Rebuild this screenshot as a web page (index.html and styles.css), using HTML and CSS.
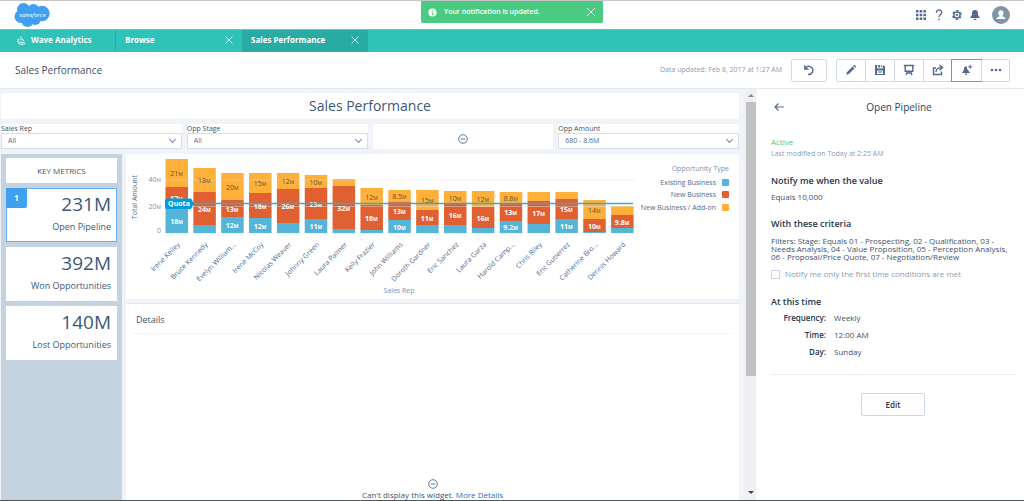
FILE: index.html
```html
<!DOCTYPE html>
<html lang="en">
<head>
<meta charset="utf-8">
<title>Sales Performance</title>
<link rel="stylesheet" href="styles.css">
</head>
<body>
<div class="app">
  <header class="topbar">
    <svg class="logo" viewBox="0 0 36 26" role="img" aria-label="salesforce">
      <g fill="#3f9ff0"><circle cx="9.500" cy="7.500" r="6.500"/><circle cx="19.500" cy="7.500" r="5.500"/><circle cx="28" cy="11.500" r="7.700"/><circle cx="7" cy="14.500" r="6.500"/><circle cx="13.500" cy="19" r="6"/><circle cx="21" cy="17" r="6"/><path d="M5 9h22v9H5z"/></g>
      <text class="logo-text" x="18.500" y="14.500">salesforce</text>
    </svg>
    <div class="toast" role="status">
      <svg class="toast-icon" viewBox="0 0 10 10"><circle cx="5" cy="5" r="4.500" fill="#fff"/><path d="M4.200 4.500H5.300V7.300M4.200 7.300h2M5 2.400v1.100" stroke="#4bca81" fill="none"/></svg>
      <span>Your notification is updated.</span>
      <button class="close toast-close" aria-label="Close notification"><svg viewBox="0 0 10 10"><path d="M1 1l8 8M9 1L1 9"/></svg></button>
    </div>
    <nav class="tools">
      <button class="icon-button" aria-label="Apps"><svg viewBox="0 0 12 12" fill="#54698d"><path d="M1 1h2.500v2.500H1zM4.700 1h2.500v2.500H4.700zM8.400 1h2.500v2.500H8.400zM1 4.700h2.500v2.500H1zM4.700 4.700h2.500v2.500H4.700zM8.400 4.700h2.500v2.500H8.400zM1 8.400h2.500v2.500H1zM4.700 8.400h2.500v2.500H4.700zM8.400 8.400h2.500v2.500H8.400z"/></svg></button>
      <button class="icon-button" aria-label="Help"><svg viewBox="0 0 12 12" fill="none" stroke="#54698d" stroke-width="1.300"><path d="M3.400 3.700C3.400 0 8.700 0 8.700 3.500C8.700 5.600 6 5.600 6 8.200M6 9.700v1.500"/></svg></button>
      <button class="icon-button" aria-label="Setup"><svg viewBox="0 0 12 12" fill="none" stroke="#54698d"><circle cx="6" cy="6" r="3.100" stroke-width="1.500"/><circle cx="6" cy="6" r="4.300" stroke-width="1.400" stroke-dasharray="2.250 2.250" stroke-dashoffset="1.120" transform="rotate(30 6 6)"/><circle cx="6" cy="6" r=".7" fill="#54698d"/></svg></button>
      <button class="icon-button" aria-label="Notifications"><svg viewBox="0 0 12 12" fill="#54698d"><path d="M6 1C3.800 1 3 2.700 3 4.300C3 6.800 2.300 7.600 1.300 8.200V9h9.400V8.200C9.700 7.600 9 6.800 9 4.300C9 2.700 8.200 1 6 1zM4.400 9.700h3.200C7.400 11.600 4.600 11.600 4.400 9.700z"/></svg></button>
      <button class="icon-button avatar" aria-label="Profile"><svg viewBox="0 0 18 18"><circle cx="9" cy="9" r="9" fill="#7f95ac"/><path d="M9 4.200c3.400 0 3 4.800 1.200 5.900c.2 1 3.300.8 3.300 3H4.500c0-2.200 3.100-2 3.300-3C6 9 5.600 4.200 9 4.200z" fill="#fff"/></svg></button>
    </nav>
  </header>

  <nav class="tabs">
    <a class="tab tab-home" href="#"><svg class="wave" viewBox="0 0 10 10" fill="none" stroke="#c9f1ed" stroke-width="1.300"><path d="M5 .8C3.300 2.300 5.300 3.300 4.300 4.700M2.300 3C0 5 .8 9.200 4.500 9.200C7 9.500 8.300 8.800 9.300 8.300M3 5.800C3.500 7.500 6 7.500 8.500 6.600M6.500 3.300C5.800 5 7 5 8 5"/></svg>Wave Analytics</a>
    <div class="tab"><a href="#">Browse</a><button class="close" aria-label="Close Browse"><svg viewBox="0 0 10 10"><path d="M1.500 1.500l7 7M8.500 1.500l-7 7"/></svg></button></div>
    <div class="tab tab-current"><a href="#">Sales Performance</a><button class="close" aria-label="Close Sales Performance"><svg viewBox="0 0 10 10"><path d="M1.500 1.500l7 7M8.500 1.500l-7 7"/></svg></button></div>
  </nav>

  <div class="toolbar">
    <h1 class="page-title">Sales Performance</h1>
    <span class="updated">Data updated: Feb 8, 2017 at 1:27 AM</span>
    <button class="tool single" aria-label="Undo"><svg viewBox="0 0 12 12"><path class="line" d="M1.800 1.300V5H5.500M2.200 4.600A4 4 0 1 1 5 10.300"/></svg></button>
    <div class="tool-group">
      <button class="tool" aria-label="Edit"><svg viewBox="0 0 12 12"><path d="M1.200 10.800l.7-2.600l5.700-5.700l1.900 1.900l-5.700 5.700zM8.200 1.900l.8-.8c.7-.6 2.400 1 1.800 1.800l-.8.8z"/></svg></button>
      <button class="tool" aria-label="Save"><svg viewBox="0 0 12 12"><path fill-rule="evenodd" d="M1 1h2.200v3.600h5.600V1L11 2.600V11H1zM3 6.500V10h6V6.500zM4.200 1h2v2.600h-2zM7.400 1h.7v2.600h-.7zM4 7.500h4v1H4z"/></svg></button>
      <button class="tool" aria-label="Present"><svg viewBox="0 0 12 12"><path class="line" d="M.8 1.500h10.400M2.200 1.500v5.700h7.600V1.500M4.500 7.500L3 11M7.500 7.500L9 11M4 9h4"/></svg></button>
      <button class="tool" aria-label="Share"><svg viewBox="0 0 12 12"><path class="line" d="M4 4H1.500v6.500h8V7.500M4 8C4 5.500 6 3.600 9.500 3.600M7.500 1l3 2.600l-3 2.600"/></svg></button>
      <button class="tool tool-active" aria-label="Set notification"><svg viewBox="0 0 12 12"><path d="M5 2.500C2.900 2.500 3 5 2.700 6.300C2.500 7.500 1.500 7.700 1 8.500v.6h8V8.500C8 7.700 7.500 7.300 7.400 6.200L6 5V2.600zM3.800 9.600h2.500c-.2 1.700-2.300 1.700-2.500 0z"/><path class="line thin" d="M9.200 .8v4M7.200 2.800h4"/></svg></button>
      <button class="tool" aria-label="More actions"><svg viewBox="0 0 12 12"><circle cx="2" cy="6" r="1.300"/><circle cx="6" cy="6" r="1.300"/><circle cx="10" cy="6" r="1.300"/></svg></button>
    </div>
  </div>

  <div class="workspace">
    <main class="dashboard">
      <h2 class="dashboard-title">Sales Performance</h2>
      <div class="filters">
        <div class="filter"><label for="rep">Sales Rep</label><select id="rep"><option>All</option></select></div>
        <div class="filter"><label for="stage">Opp Stage</label><select id="stage"><option>All</option></select></div>
        <div class="filter-empty"><svg class="minus" viewBox="0 0 10 10"><circle cx="5" cy="5" r="4.300"/><path d="M2.700 5h4.600"/></svg></div>
        <div class="filter"><label for="amount">Opp Amount</label><select id="amount"><option>680 - 8.6M</option></select></div>
      </div>
      <div class="content">
        <aside class="metrics">
          <h3 class="metrics-title">KEY METRICS</h3>
          <div class="metric metric-selected"><span class="badge">1</span><strong>231M</strong><span>Open Pipeline</span></div>
          <div class="metric"><strong>392M</strong><span>Won Opportunities</span></div>
          <div class="metric"><strong>140M</strong><span>Lost Opportunities</span></div>
        </aside>
        <div class="widgets">
          <section class="chart-card"><svg id="chart" class="chart" viewBox="0 0 613 145" role="img" aria-label="Total amount by sales rep"></svg></section>
          <section class="details">
            <h3 class="details-title">Details</h3>
            <div class="details-error">
              <svg class="minus" viewBox="0 0 10 10"><circle cx="5" cy="5" r="4.300"/><path d="M2.700 5h4.600"/></svg>
              <p>Can't display this widget. <a href="#">More Details</a></p>
            </div>
          </section>
        </div>
      </div>
    </main>
    <div class="scrollbar"><span class="arrow-up"></span><span class="thumb"></span><span class="arrow-down"></span></div>
    <aside class="panel">
      <div class="panel-head">
        <button class="back" aria-label="Back"><svg viewBox="0 0 10 10"><path d="M9.800 5H1M4.500 1.500L1 5l3.500 3.500"/></svg></button>
        <h2>Open Pipeline</h2>
      </div>
      <div class="panel-body">
        <p class="active">Active</p>
        <p class="modified">Last modified on Today at 2:25 AM</p>
        <h3>Notify me when the value</h3>
        <p class="value">Equals 10,000</p>
        <h3>With these criteria</h3>
        <p class="criteria">Filters: Stage: Equals 01 - Prospecting, 02 - Qualification, 03 - Needs Analysis, 04 - Value Proposition, 05 - Perception Analysis, 06 - Proposal/Price Quote, 07 - Negotiation/Review</p>
        <label class="check"><input type="checkbox">Notify me only the first time conditions are met</label>
        <h3 class="time-title">At this time</h3>
        <dl class="schedule"><dt>Frequency:</dt><dd>Weekly</dd><dt>Time:</dt><dd>12:00 AM</dd><dt>Day:</dt><dd>Sunday</dd></dl>
        <div class="actions"><button class="edit">Edit</button></div>
      </div>
    </aside>
  </div>
</div>
<script src="chart.js"></script>
</body>
</html>
```
FILE: styles.css
```css
* { box-sizing: border-box; }
body { margin: 0; font-family: "Open Sans", "Noto Sans", sans-serif; font-size: 8px; line-height: 12px; color: #40536b; background: #fff; }
h1, h2, h3, p, dl, dd { margin: 0; font-weight: 400; }
button { font: inherit; color: inherit; background: none; border: 0; padding: 0; display: flex; align-items: center; justify-content: center; cursor: pointer; }
a { color: inherit; text-decoration: none; }
svg { display: block; }

.app { display: flex; flex-direction: column; height: 100vh; border-top: 1px solid #c4c4c4; border-bottom: 1px solid #4c565c; overflow: hidden; }

.topbar { position: relative; display: flex; align-items: center; justify-content: space-between; height: 28px; flex: none; padding: 0 14px; }
.logo { width: 36px; height: 26px; }
.logo-text { font-size: 6px; font-style: italic; fill: #fff; text-anchor: middle; }
.toast { position: absolute; top: 0; left: 50%; transform: translateX(-50%); display: flex; align-items: center; gap: 7px; width: 182px; height: 22px; padding: 0 7px; border-radius: 0 0 2px 2px; background: #4bca81; color: #fff; font-weight: 600; font-size: 7px; }
.toast-icon { width: 9px; height: 9px; }
.toast-close { margin-left: auto; }
.close svg { width: 10px; height: 10px; fill: none; stroke: #fff; stroke-width: 1; }
.tools { display: flex; align-items: center; gap: 6px; }
.icon-button svg { width: 12px; height: 12px; }
.avatar { margin-left: 5px; }
.avatar svg { width: 18px; height: 18px; }

.tabs { display: flex; height: 23px; flex: none; background: #2fc2b9; border-top: 1px solid #58cfc7; color: #fff; font-weight: 700; line-height: 10px; }
.tab { display: flex; align-items: center; justify-content: space-between; width: 126px; padding: 0 8px 2px 9px; }
.tab-home { width: 116px; justify-content: flex-start; gap: 5px; padding-left: 17px; border-right: 1px solid #27aba3; }
.tab-current { background: #27aba3; }
.wave { width: 9px; height: 9px; }
.tab .close svg { stroke: #d0f2ef; }

.toolbar { display: flex; align-items: center; height: 37px; flex: none; padding: 0 14px 0 15px; border-bottom: 1px solid #e2e9f0; }
.page-title { flex: 1; font-size: 10px; color: #384f68; }
.updated { margin-right: 9px; font-size: 7px; color: #8b9bb2; }
.tool { width: 29px; height: 21px; border-left: 1px solid #d0dae6; }
.tool-group .tool:first-child { width: 28px; border-left: 0; }
.tool-group .tool:last-child { width: 28px; }
.tool svg { width: 12px; height: 12px; fill: #54698d; }
.tool .line { fill: none; stroke: #54698d; stroke-width: 1.400; }
.tool .thin { stroke-width: 1; }
.single { width: 36px; height: 23px; margin-right: 9px; border: 1px solid #d0dae6; border-radius: 2px; }
.tool-group { display: flex; border: 1px solid #d0dae6; border-radius: 2px; }
.tool-active { outline: 1px solid #7d93b3; border-color: transparent; }

.workspace { display: flex; flex: 1; min-height: 0; }
.dashboard { flex: 1; min-width: 0; display: flex; flex-direction: column; gap: 5px; padding: 4px 6px 0 1px; background: #f0f4f9; }
.dashboard-title { flex: none; background: #fff; color: #3d5877; text-align: center; font-size: 14px; line-height: 26px; }
.filters { display: grid; grid-template-columns: repeat(4, 1fr); gap: 5px; flex: none; }
.filter { position: relative; display: flex; flex-direction: column; font-size: 7px; }
.filter label { line-height: 9px; background: #fff; }
.filter select { appearance: none; height: 16px; width: 100%; padding: 0 6px; border: 1px solid #d4dfe9; border-radius: 0; font: inherit; color: #54698d; background: #fff; }
.filter::after { content: ""; position: absolute; right: 7px; bottom: 7px; width: 4px; height: 4px; border: solid #6e89a8; border-width: 0 1px 1px 0; transform: rotate(45deg); pointer-events: none; }
.filter-empty { display: flex; align-items: center; justify-content: center; background: #fff; padding-top: 4px; }
.minus { width: 10px; height: 10px; fill: none; stroke: #607b9c; stroke-width: 1; }

.content { display: flex; gap: 4px; flex: 1; min-height: 0; }
.metrics { display: flex; flex-direction: column; gap: 5px; width: 121px; padding: 4px 5px; background: #c5d3e0; }
.metrics-title { background: #fff; line-height: 25px; text-align: center; font-size: 8px; }
.metric { position: relative; display: flex; flex-direction: column; align-items: flex-end; height: 54px; padding: 5px 6px; background: #fff; color: #3d5877; font-size: 9px; line-height: 23px; }
.metric strong { font-size: 19px; line-height: 22px; font-weight: 400; }
.metric-selected { outline: 1px solid #63b0f5; outline-offset: -1px; }
.badge { position: absolute; left: 0; top: 0; width: 21px; background: #3f9ff0; color: #fff; font-size: 8px; line-height: 20px; font-weight: 700; text-align: center; border-radius: 0 0 2px 0; }

.widgets { display: flex; flex-direction: column; gap: 4px; flex: 1; min-width: 0; }
.chart-card { background: #fff; flex: none; }
.chart { width: 100%; font-size: 7px; }
.grid { stroke: #e4e8ec; }
.axis { fill: #7f93ae; }
.axis-title { fill: #54698d; }
.orange { fill: #ffb03b; }
.red { fill: #e16032; }
.blue { fill: #54b5d9; }
.bar-label { text-anchor: middle; fill: #fff; font-weight: 700; }
.bar-label.dark { fill: #665230; font-weight: 400; }
.unit { font-size: 5px; }
.end { text-anchor: end; }
.middle { text-anchor: middle; }
.quota-line { stroke: #36a9d8; stroke-width: 1.500; }
.quota-tag { fill: #049bdc; }

.details { display: flex; flex-direction: column; flex: 1; padding: 0 6px; background: #fff; border-top: 1px solid #e1e9f0; }
.details-title { padding: 3px 0 0 4px; font-size: 9px; line-height: 26px; margin-bottom: auto; border-bottom: 1px solid #f4f5f6; }
.details-error { display: flex; flex-direction: column; align-items: center; }
.details-error p { line-height: 11px; }
.details-error a { color: #2a6bd0; }

.scrollbar { display: flex; flex-direction: column; align-items: center; width: 12px; padding: 5px 0 6px; background: #f0f0f0; border-right: 1px solid #fafafa; }
.arrow-up { border: 3px solid transparent; border-top: 0; border-bottom-color: #888; }
.thumb { width: 10px; height: 274px; margin-top: 5px; background: #c1c1c1; }
.arrow-down { margin-top: auto; border: 3px solid transparent; border-bottom: 0; border-top-color: #444; }

.panel { width: 267px; background: #fff; }
.panel-head { display: flex; align-items: center; height: 36px; padding: 0 10px 0 17px; border-bottom: 1px solid #fafbfc; }
.panel-head h2 { flex: 1; text-align: center; font-size: 10px; color: #2f455e; }
.back svg { width: 10px; height: 10px; fill: none; stroke: #54698d; stroke-width: 1.200; }
.panel-body { padding: 11px 9px 0 14px; }
.active { color: #4bca81; }
.modified { color: #8b9bb2; font-size: 7px; }
.panel-body h3 { margin-top: 14px; font-size: 9px; font-weight: 600; line-height: 14px; color: #23374d; }
.value { margin-top: 3px; }
.criteria { margin-top: 6px; line-height: 8px; }
.check { display: flex; align-items: center; gap: 5px; margin-top: 7px; color: #8b9bb2; }
.check input { appearance: none; width: 9px; height: 9px; margin: 0; border: 1px solid #c6d4e2; border-radius: 1px; }
.panel-body .time-title { margin-top: 15px; }
.schedule { display: grid; grid-template-columns: 55px 1fr; column-gap: 8px; line-height: 17px; }
.schedule dt { text-align: right; font-weight: 600; color: #23374d; }
.actions { display: flex; justify-content: center; margin-top: 14px; padding-top: 18px; border-top: 1px solid #e8ecf0; }
.edit { width: 64px; height: 23px; border: 1px solid #ccd8e6; border-radius: 2px; font-weight: 600; color: #23374d; }
```
FILE: chart.js
```js
const BASE = 79;
const reps = [
  { name: "Irene Kelley", tops: [5, 33, 55], labels: ["21", "17", "18"] },
  { name: "Bruce Kennedy", tops: [14, 38, 71], labels: ["18", "24", ""] },
  { name: "Evelyn William...", tops: [19, 46, 63], labels: ["20", "13", "12"] },
  { name: "Irene McCoy", tops: [19, 39, 64], labels: ["15", "18", "12"] },
  { name: "Nicolas Weaver", tops: [19, 35, 69], labels: ["12", "26", ""] },
  { name: "Johnny Green", tops: [21, 34, 65], labels: ["10", "23", "11"] },
  { name: "Laura Palmer", tops: [25, 32, 75], labels: ["", "32", ""] },
  { name: "Kelly Frazier", tops: [34, 51, 76], labels: ["12", "18", ""] },
  { name: "John Williams", tops: [36, 48, 66], labels: ["8.5", "13", "10"] },
  { name: "Doroth Gardner", tops: [36, 56, 71], labels: ["15", "11", ""] },
  { name: "Eric Sanchez", tops: [37, 50, 71], labels: ["10", "16", ""] },
  { name: "Laura Garza", tops: [37, 53, 74], labels: ["12", "16", ""] },
  { name: "Harold Camp...", tops: [38, 49, 67], labels: ["8.8", "13", "9.2"] },
  { name: "Chris Riley", tops: [38, 47, 70], labels: ["", "17", ""] },
  { name: "Eric Gutierrez", tops: [38, 45, 65], labels: ["", "15", "11"] },
  { name: "Catherine Bro...", tops: [46, 65, 78], labels: ["14", "10", ""] },
  { name: "Dennis Howard", tops: [52, 61, 74], labels: ["", "9.8", ""] }
];
const colors = ["orange", "red", "blue"];
const amount = n => `${n}<tspan class="unit">M</tspan>`;
const bars = [];
const grid = [];
const labels = [];

reps.forEach((rep, i) => {
  const x = 39.500 + i * 27.850;
  rep.tops.forEach((top, s) => {
    const bottom = s < 2 ? rep.tops[s + 1] : BASE;
    bars.push(`<rect class="${colors[s]}" x="${x}" y="${top}" width="22.500" height="${bottom - top}"/>`);
    if (rep.labels[s]) {
      labels.push(`<text class="bar-label ${s === 0 ? "dark" : ""}" x="${x + 11}" y="${(top + bottom) / 2 + 3}">${amount(rep.labels[s])}</text>`);
    }
  });
  labels.push(`<text class="axis-title end" transform="translate(${x + 15} 91) rotate(-45)">${rep.name}</text>`);
});

[[26, "40"], [52.500, "20"], [BASE + .500, ""]].forEach(([y, n]) => {
  grid.push(`<path class="grid" stroke-opacity=".4" d="M39 ${y}H510"/>`);
  if (n) labels.push(`<text class="axis end" x="35" y="${y + 2}">${amount(n)}</text>`);
});
labels.push(`<text class="axis end" x="35" y="79">0</text>`);
labels.push(`<text class="axis-title middle" transform="translate(11 43) rotate(-90)">Total Amount</text>`);
labels.push(`<text class="axis middle" x="273" y="139">Sales Rep</text>`);
labels.push(`<path class="quota-line" d="M66 49.500H507"/><path class="quota-tag" d="M41 44.500H65L68 49.500L65 55H41q-2 0-2-2V46.500q0-2 2-2z"/><text class="bar-label" x="53" y="52">Quota</text>`);

labels.push(`<text class="axis end" x="603" y="17">Opportunity Type</text>`);
[["Existing Business", "blue", 28], ["New Business", "red", 40], ["New Business / Add-on", "orange", 53]].forEach(([label, color, y]) => {
  labels.push(`<text class="axis-title end" x="590" y="${y + 3}">${label}</text><rect class="${color}" x="596" y="${y - 3}" width="7" height="7" rx="1"/>`);
});
document.getElementById("chart").innerHTML = bars.concat(grid, labels).join("");
```
